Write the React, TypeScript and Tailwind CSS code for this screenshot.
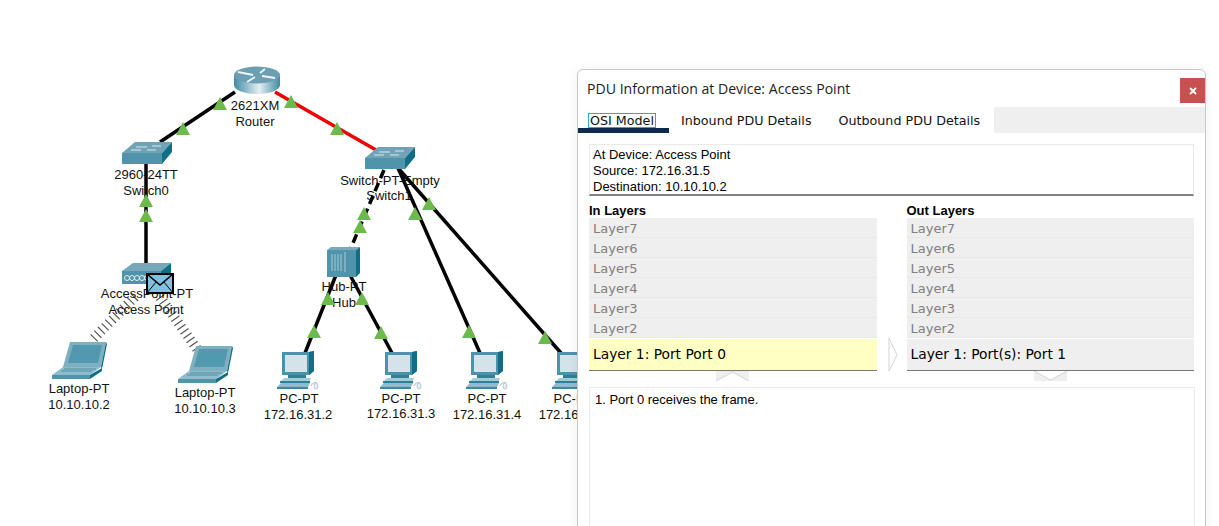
const GREEN = '#6cb94c';

const tris: [number, number][] = [
  [220, 97], [183, 122], [291, 95], [337, 122], [146, 194], [146, 209],
  [364, 207], [360, 220], [415, 207], [429, 197], [328, 292], [362, 292],
  [314, 325], [381, 326], [469, 325], [545, 331],
];

const pcs = [282, 385, 471, 557];

const labels: [string, number, number][] = [
  ['2621XM', 255, 105], ['Router', 255, 121],
  ['2960-24TT', 146, 174], ['Switch0', 146, 190],
  ['Switch-PT-Empty', 390, 180], ['Switch1', 389, 195],
  ['Hub-PT', 344, 286], ['Hub', 344, 302],
  ['AccessPoint-PT', 147, 293], ['Access Point', 146, 309],
  ['Laptop-PT', 79, 388], ['10.10.10.2', 79, 404],
  ['Laptop-PT', 205, 392], ['10.10.10.3', 205, 408],
  ['PC-PT', 299, 398], ['172.16.31.2', 298, 414],
  ['PC-PT', 401, 398], ['172.16.31.3', 401, 413],
  ['PC-PT', 487, 398], ['172.16.31.4', 487, 414],
  ['PC-PT', 573, 398], ['172.16.31.5', 573, 414],
];

const Switch = ({ x, y }: { x: number; y: number }) => (
  <g transform={`translate(${x} ${y})`}>
    <polygon points="0,11 13,0 50,0 40,11" fill="#6fa3b5" />
    <polygon points="0,11 40,11 40,22 0,22" fill="#4f94ab" />
    <polygon points="40,11 50,0 50,10 40,22" fill="#0f6f86" />
    <g stroke="#dce9ee" strokeWidth="1" fill="none">
      <path d="M14 5h11M30 4h9M9 8h10M25 8h9" />
    </g>
  </g>
);

const Pc = ({ x }: { x: number }) => (
  <g transform={`translate(${x} 352)`}>
    <polygon points="0,0 27,0 32,-1 32,19 27,23 0,23" fill="#4b93ab" />
    <polygon points="27,0 32,-1 32,19 27,23" fill="#106f87" />
    <rect x="3" y="3" width="22" height="17" fill="#d4e3ea" />
    <rect x="6" y="23" width="18" height="3" fill="#2f7f98" />
    <polygon points="-1,29 28,29 29,26 2,26" fill="#a5cbd7" />
    <rect x="-2" y="29" width="30" height="2" fill="#2f7f98" />
    <polygon points="-5,35 -1,31 28,31 26,35" fill="#8fbccb" />
    <rect x="-5" y="35" width="31" height="2" fill="#3a8aa2" />
    <path d="M29 34c1-3 4-4 6-3" stroke="#9fb8c2" strokeWidth="1" fill="none" />
    <ellipse cx="34" cy="34" rx="2" ry="3" fill="#e8eef1" stroke="#9fb8c2" strokeWidth="0.7" />
  </g>
);

const Laptop = ({ x, y }: { x: number; y: number }) => (
  <g transform={`translate(${x} ${y})`}>
    <polygon points="18,0 54,0 49,25 11,25" fill="#7fb0c0" />
    <polygon points="21,3 50,3 46,21 16,21" fill="#5299af" />
    <polygon points="54,0 55,2 50,27 49,25" fill="#106f87" />
    <polygon points="0,33 11,25 49,25 38,33" fill="#8fbccb" />
    <path d="M12 27h32M9 29h31" stroke="#4f8ea3" strokeWidth="1" />
    <polygon points="0,33 38,33 38,37 0,37" fill="#4f94ab" />
    <polygon points="38,33 50,26 50,29 38,37" fill="#106f87" />
  </g>
);

const Network = () => (
  <>
    <svg width="600" height="526" className="absolute left-0 top-0">
      <defs>
        <linearGradient id="routerBody" x1="0" x2="1" y1="0" y2="0">
          <stop offset="0" stopColor="#3f8ba3" />
          <stop offset="0.55" stopColor="#e4eff3" />
          <stop offset="1" stopColor="#3f8ba3" />
        </linearGradient>
      </defs>
      <g stroke="#000" strokeWidth="3.5" fill="none">
        <path d="M235 92 160 142" />
        <path d="M146 160V266" />
        <path d="M398 168 480 353" />
        <path d="M398 168 561 353" />
        <path d="M384 170 350 250" strokeDasharray="9 5" />
        <path d="M336 275 305 353" />
        <path d="M350 275 392 353" />
      </g>
      <path d="M275 92 376 150" stroke="#f00000" strokeWidth="3.5" />
      <g stroke="#555" strokeWidth="10" strokeDasharray="1.2 4" fill="none">
        <path d="M135 297 92 340" />
        <path d="M160 297 197 349" />
      </g>

      {/* router */}
      <path d="M234 75v10c0 5 10 9 23 9s23-4 23-9V75Z" fill="url(#routerBody)" />
      <ellipse cx="257" cy="75" rx="23" ry="8.5" fill="#6b9fb1" />
      <path d="M238 72l15 3M260 73l5-4M262 76l13 2M247 82l8-5" stroke="#eef5f7" strokeWidth="1.8" fill="none" />

      <Switch x={122} y={142} />
      <Switch x={365} y={147} />

      {/* hub */}
      <polygon points="327,250 331,247 360,247 356,250" fill="#79aabb" />
      <rect x="327" y="250" width="29" height="27" fill="#4f94ab" />
      <polygon points="356,250 360,247 360,273 356,277" fill="#0f6f86" />
      <path d="M332 254v17M335 254v17M338 254v17M341 254v17M345 252v20" stroke="#a9cbd6" strokeWidth="1" />

      {/* access point */}
      <polygon points="122,271 133,263 171,263 161,271" fill="#77a8b9" />
      <rect x="122" y="271" width="39" height="13" fill="#4f94ab" />
      <polygon points="161,271 171,263 171,275 161,284" fill="#0f6f86" />
      <g fill="none" stroke="#e3eef2" strokeWidth="1">
        <circle cx="127" cy="278" r="2.5" />
        <circle cx="132" cy="278" r="2.5" />
        <circle cx="137" cy="278" r="2.5" />
        <circle cx="142" cy="278" r="2.5" />
        <circle cx="147" cy="278" r="2.5" />
      </g>

      <Laptop x={52} y={342} />
      <Laptop x={178} y={346} />
      {pcs.map((x) => (
        <Pc key={x} x={x} />
      ))}
    </svg>

    {labels.map(([text, cx, cy], i) => (
      <span
        key={i}
        className="absolute -translate-x-1/2 -translate-y-1/2 whitespace-nowrap text-[13px] leading-none text-[#111]"
        style={{ left: cx, top: cy }}
      >
        {text}
      </span>
    ))}

    <svg width="600" height="526" className="absolute left-0 top-0">
      {tris.map(([x, y], i) => (
        <polygon key={i} points={`${x},${y} ${x + 7},${y + 13} ${x - 7},${y + 13}`} fill={GREEN} />
      ))}
      {/* envelope */}
      <rect x="147" y="274" width="26" height="19" fill="#7fc1de" stroke="#000" strokeWidth="2" />
      <path d="M147 274l13 11 13-11" fill="none" stroke="#000" strokeWidth="1.6" />
      <path d="M147 293l9-11M173 293l-9-11" fill="none" stroke="#000" strokeWidth="1" />
    </svg>
  </>
);

const LayerColumn = ({ title, active, highlight }: { title: string; active: string; highlight?: boolean }) => (
  <div className="flex flex-1 flex-col">
    <div className="flex h-[22px] items-end pb-px text-[13px] font-bold leading-none text-black">{title}</div>
    <div className="font-['DejaVu_Sans',sans-serif] text-[13px] text-[#808080]">
      {['Layer7', 'Layer6', 'Layer5', 'Layer4', 'Layer3', 'Layer2'].map((l) => (
        <div key={l} className="flex h-[20px] items-center border-b border-[#e8e8e8] bg-[#efefef] pl-1 pt-[2px]">
          {l}
        </div>
      ))}
      <div
        className={`mt-px flex h-[32px] items-center border-b border-[#777] pl-1 text-[13.8px] text-black ${
          highlight ? 'bg-[#ffffc4]' : 'bg-[#efefef]'
        }`}
      >
        {active}
      </div>
    </div>
  </div>
);

const PduDialog = () => (
  <div className="absolute left-[577px] top-[69px] flex h-[470px] w-[629px] flex-col rounded-t-md border border-[#c8c8c8] bg-white font-['Liberation_Sans',sans-serif] shadow-[0_0_12px_rgba(0,0,0,0.06)]">
    <div className="flex h-[37px] items-start justify-between pt-2">
      <div className="pl-[9px] pt-[1px] font-['Open_Sans',sans-serif] text-[14.1px] leading-5 text-[#222]">
        PDU Information at Device: Access Point
      </div>
      <div className="flex h-[25px] w-[25px] items-center justify-center bg-[#c75050]">
        <svg width="8" height="8" viewBox="0 0 8 8">
          <path d="M1 1l6 6M7 1 1 7" stroke="#fff" strokeWidth="1.8" />
        </svg>
      </div>
    </div>

    <div className="flex h-[26px] bg-[#efefef] font-['DejaVu_Sans',sans-serif] text-[12.7px] leading-none text-[#111]">
      <div className="flex w-[91px] flex-col bg-white pt-[6px]">
        <span className="ml-[10px] h-[15px] w-fit border border-[#2aa8d8] px-px pt-px">OSI Model</span>
        <div className="mt-auto h-[5px] bg-[#0f2a4f]" />
      </div>
      <div className="flex items-center bg-white pl-[12px] pr-[13px] pt-[2px]">Inbound PDU Details</div>
      <div className="flex items-center bg-white pl-[14px] pr-[14px] pt-[2px]">Outbound PDU Details</div>
    </div>

    <div className="flex min-h-0 flex-1 flex-col pl-[11px] pr-[10px] pt-[11px]">
      <div className="mr-px h-[52px] border border-b-2 border-[#eaeaea] border-b-[#808080] pl-[3px] pt-[2px] text-[13px] leading-4 text-black">
        <div>At Device: Access Point</div>
        <div>Source: 172.16.31.5</div>
        <div>Destination: 10.10.10.2</div>
      </div>

      <div className="mr-px flex gap-[30px]">
        <LayerColumn title="In Layers" active="Layer 1: Port Port 0" highlight />
        <LayerColumn title="Out Layers" active="Layer 1: Port(s): Port 1" />
      </div>

      <div className="mr-px flex h-[16px] gap-[30px]">
        <div className="flex flex-1 justify-center">
          <svg width="33" height="10" viewBox="0 0 33 10">
            <rect width="33" height="10" fill="#efefef" />
            <path d="M0 10 16.5 1 33 10" fill="#fff" stroke="#d4d4d4" />
          </svg>
        </div>
        <div className="flex flex-1 justify-center">
          <svg width="33" height="10" viewBox="0 0 33 10">
            <rect width="33" height="10" fill="#efefef" />
            <path d="M0 0 16.5 9 33 0" fill="#fff" stroke="#d4d4d4" />
          </svg>
        </div>
      </div>

      <div className="flex-1 border border-[#eaeaea] pl-[5px] pt-[4px] text-[13px] leading-4 text-black">
        1. Port 0 receives the frame.
      </div>
    </div>

    {/* arrow between the two layer columns */}
    <svg width="10" height="34" viewBox="0 0 10 34" className="absolute left-[310px] top-[268px]">
      <path d="M1 0 9 17 1 33Z" fill="#fff" stroke="#d4d4d4" />
    </svg>
  </div>
);

export default function App() {
  return (
    <div className="relative h-[526px] w-[1219px] overflow-hidden bg-white font-['Liberation_Sans',sans-serif]">
      <Network />
      <PduDialog />
    </div>
  );
}
